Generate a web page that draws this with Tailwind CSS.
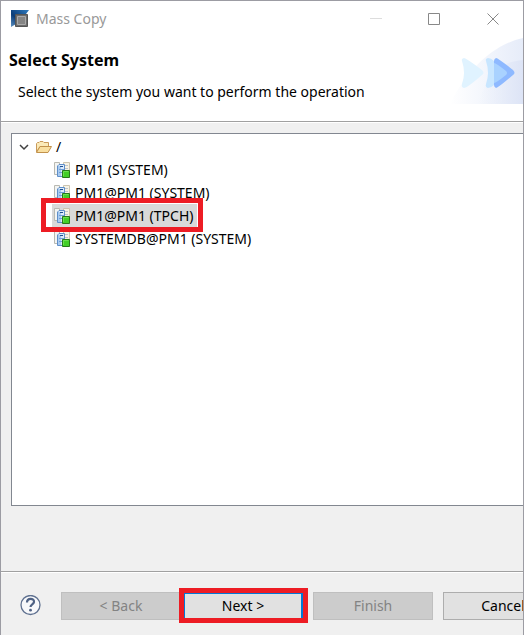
<!DOCTYPE html>
<html lang="en">
<head>
<meta charset="utf-8">
<meta name="viewport" content="width=device-width, initial-scale=1">
<title>Mass Copy</title>
<script src="https://cdn.jsdelivr.net/npm/@tailwindcss/browser@4"></script>
</head>
<body class="bg-[#f0f0f0] font-['Noto_Sans','Open_Sans',sans-serif] text-sm text-black">
<svg class="hidden" aria-hidden="true">
  <symbol id="system" viewBox="0 0 16 16">
    <path d="M.5.500h5v12h-5z" fill="#f3f4f2" stroke="#b9b9b2"/>
    <path d="M9.500.500h6v11h-6z" fill="#f8f3e4" stroke="#cdc5b0"/>
    <path d="M11 3.500h3M11 6.500h3" stroke="#bcc4cc"/>
    <path d="M3.500 4v10.500h7V2.500h-5.500z" fill="#dcebfb" stroke="#5f8fca"/>
    <path d="M4 4h3v10H4z" fill="#a8caf0"/>
    <path d="M6 4.500h3" stroke="#1f4f8f"/>
    <path d="M5 7.500h5M5 10.500h4" stroke="#6f9fd8"/>
    <path d="M8.500 8.500h7v7h-7z" fill="#42cf27" stroke="#28791a"/>
    <path d="M9.500 14v-4.500h5" fill="none" stroke="#6ce050"/>
  </symbol>
</svg>
<main class="flex min-h-screen flex-col overflow-hidden border-x border-t border-[#9c9ca3]">
  <header class="relative h-30 bg-white">
    <div class="flex h-9 items-center pl-2.5">
      <svg class="size-[18px]" viewBox="0 0 18 18" aria-hidden="true">
        <defs><linearGradient id="app" x1="0" y1="1" x2="1" y2="0"><stop offset="0" stop-color="#5e93c4"/><stop offset=".4" stop-color="#0c3d78"/><stop offset="1" stop-color="#2f7cc0"/></linearGradient></defs>
        <path d="M0 0h18l-3 4H5v10l-5 3z" fill="url(#app)"/>
        <path d="M4.500 4.500h12v12h-12z" fill="#6c6c6c" stroke="#555"/>
        <path d="M6.500 6.500h8v8h-8z" fill="#858585" stroke="#aaa"/>
      </svg>
      <span class="ml-[7px] flex-1 text-[#999]">Mass Copy</span>
      <div class="flex">
        <button class="flex h-9 w-[58px] items-center justify-center" aria-label="Minimize" disabled><svg class="size-3.5" viewBox="0 0 14 14"><path d="M1 6.500h12" stroke="#ddd"/></svg></button>
        <button class="flex h-9 w-[58px] items-center justify-center" aria-label="Maximize"><svg class="size-3" viewBox="0 0 12 12"><path d="M.5.500h11v11H.5z" fill="none" stroke="#888"/></svg></button>
        <button class="flex h-9 w-[60px] items-center justify-center" aria-label="Close"><svg class="size-3" viewBox="0 0 12 12"><path d="M.5.500l11 11M11.500.500l-11 11" stroke="#888"/></svg></button>
      </div>
    </div>
    <h1 class="mt-[11px] pl-2 text-base leading-6 font-bold">Select System</h1>
    <p class="mt-2 pl-[17px] leading-6">Select the system you want to perform the operation</p>
    <svg class="absolute top-9 right-0 h-[67px] w-[75px]" viewBox="0 0 75 67" aria-hidden="true">
      <defs>
        <linearGradient id="far" x1="0" x2="1"><stop offset="0" stop-color="#fff"/><stop offset="1" stop-color="#e6ecf9"/></linearGradient>
        <linearGradient id="near" x1="0" x2="1"><stop offset="0" stop-color="#e9eef9" stop-opacity="0"/><stop offset="1" stop-color="#dde4f6"/></linearGradient>
      </defs>
      <path d="M2 67C16 38 42 8 75 1v66z" fill="url(#far)"/>
      <path d="M30 67C38 40 50 25 75 23v44z" fill="url(#near)"/>
      <g transform="translate(1 1)">
        <path d="M15 20q2 0 18 12q3 3 0 5Q18 50 15 50q-3-1-2-4q4-11 0-23q-1-2 2-3z" fill="#e0f3ff"/>
        <path d="M47 20q2 0 17 12q3 3 0 5Q49 50 47 50q-2-1-2-3V23q0-2 2-3z" fill="#8eb9ff"/>
        <path d="M45 25q2 0 12 8q2 2 0 4Q47 45 45 45z" fill="#a9d2ff"/>
        <path d="M39 20q3 0 6 3v24q-3 3-6 3q-3-1-2-4q4-11 0-23q-1-2 2-3z" fill="#c8e6ff"/>
      </g>
    </svg>
  </header>
  <section class="flex flex-1 flex-col border-y border-[#a0a0a0] pt-[11px] pb-[65px] pl-2.5 shadow-[inset_0_1px_#fff]">
    <ul role="tree" aria-label="Systems" class="flex-1 border-y border-l border-[#828790] bg-white pt-px">
      <li role="treeitem" aria-expanded="true">
        <div class="flex h-[23px] items-center pl-1.5">
          <button class="flex w-3 justify-center" aria-label="Collapse"><svg class="h-2 w-2.5" viewBox="0 0 10 8"><path d="M1 2l4 4 4-4" fill="none" stroke="#404040" stroke-width="1.500"/></svg></button>
          <svg class="ml-1.5 h-3 w-4" viewBox="0 0 16 12" aria-hidden="true">
            <path d="M.5 11V2.500l1-1h1.500l1-1h3l1 1h4.500v4H4z" fill="#fbeab8" stroke="#c99a5a"/>
            <path d="M.5 11.500L4 5.500h11.500l-3.500 6z" fill="#f9dfa0" stroke="#c2924c"/>
          </svg>
          <span class="ml-1">/</span>
        </div>
        <ul role="group">
          <li role="treeitem" class="flex h-[23px] items-center pl-[42px]"><svg class="size-4" aria-hidden="true"><use href="#system"/></svg><span class="ml-[5px]">PM1 (SYSTEM)</span></li>
          <li role="treeitem" class="flex h-[23px] items-center pl-[42px]"><svg class="size-4" aria-hidden="true"><use href="#system"/></svg><span class="ml-[5px]">PM1@PM1 (SYSTEM)</span></li>
          <li role="treeitem" aria-selected="true" class="flex h-[23px] pl-10">
            <div class="relative flex items-center bg-[#d9d9d9] pr-1 pl-0.5">
              <svg class="size-4" aria-hidden="true"><use href="#system"/></svg><span class="ml-[5px]">PM1@PM1 (TPCH)</span>
              <span class="pointer-events-none absolute -top-1.5 -right-1.5 -bottom-[5px] -left-[11px] border-5 border-[#ed1c24]"></span>
            </div>
          </li>
          <li role="treeitem" class="flex h-[23px] items-center pl-[42px]"><svg class="size-4" aria-hidden="true"><use href="#system"/></svg><span class="ml-[5px]">SYSTEMDB@PM1 (SYSTEM)</span></li>
        </ul>
      </li>
    </ul>
  </section>
  <footer class="flex h-[63px] items-center pt-1 pl-[19px] shadow-[inset_0_1px_#fff]">
    <button class="mr-5 shrink-0" aria-label="Help">
      <svg class="size-[21px]" viewBox="0 0 21 21"><circle cx="10.500" cy="10" r="9.500" fill="#f7f8fa" stroke="#5f7190" stroke-width="1.300"/><path d="M7 7.500c0-5 7.500-4.500 7-.5-.3 2.500-3.500 2.300-3.500 5" fill="none" stroke="#4f6285" stroke-width="2.200"/><circle cx="10.500" cy="15.200" r="1.400" fill="#4f6285"/></svg>
    </button>
    <button class="h-7 w-30 shrink-0 border border-[#bfbfbf] bg-[#ccc] text-[#838383]" disabled>&lt; Back</button>
    <div class="relative mr-2.5 shrink-0">
      <button class="h-7 w-[122px] border-y-2 border-r-2 border-l-4 border-[#0078d7] bg-[#e1e1e1]">Next &gt;</button>
      <span class="pointer-events-none absolute -top-1 -right-[5px] -bottom-[3px] -left-0.5 border-5 border-[#ed1c24]"></span>
    </div>
    <button class="mr-2.5 h-7 w-30 shrink-0 border border-[#bfbfbf] bg-[#ccc] text-[#838383]" disabled>Finish</button>
    <button class="h-7 w-30 shrink-0 border border-[#adadad] bg-[#e1e1e1]">Cancel</button>
  </footer>
</main>
</body>
</html>
